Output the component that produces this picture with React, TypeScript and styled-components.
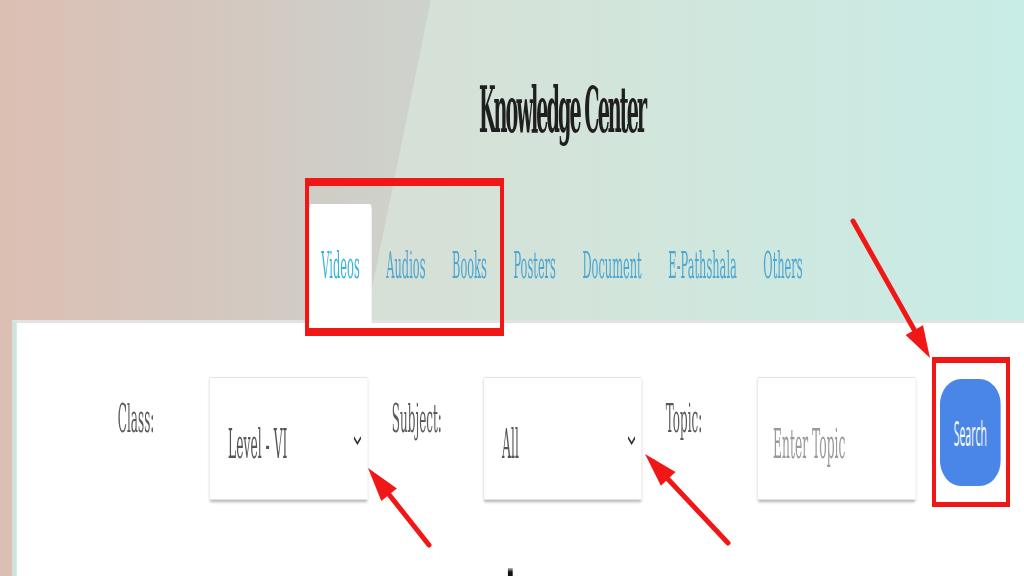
import styled, { createGlobalStyle } from "styled-components";

// the reference is a page squeezed horizontally; the stage is laid out wide
// and scaled back down on x only
const S = 0.3;
const u = (px: number) => `${px / S}px`;

const GlobalStyle = createGlobalStyle`
  html, body {
    margin: 0;
    padding: 0;
  }
  body {
    overflow: hidden;
    font-family: "DejaVu Serif", "Liberation Serif", serif;
  }
`;

const Viewport = styled.div`
  position: relative;
  width: 1024px;
  height: 576px;
  overflow: hidden;
  background: linear-gradient(90deg, #dcbfb3 0%, #d5c6bd 18%, #d0cdc7 32%, #ced3cd 42%);

  &::before {
    content: "";
    position: absolute;
    inset: 0;
    background: linear-gradient(90deg, #d6e0d6 40%, #d1e6dc 65%, #c8ece6 100%);
    clip-path: polygon(431px 0, 100% 0, 100% 100%, 313px 100%);
  }
`;

const Stage = styled.div`
  position: relative;
  box-sizing: border-box;
  width: ${1112 / S}px;
  padding-left: ${u(12)};
  transform: scaleX(${S});
  transform-origin: 0 0;
`;

const Header = styled.header`
  padding-top: 72px;
`;

const Title = styled.h1`
  margin: 0;
  text-align: center;
  font: 700 64px/76px "DejaVu Serif", serif;
  letter-spacing: -6.6px;
  color: #1f1f1f;
`;

const TabRow = styled.nav`
  position: relative;
  z-index: 1;
  display: flex;
  justify-content: center;
  gap: ${u(2.5)};
  margin: 56px 0 -3px;
`;

const Tab = styled.a<{ $active?: boolean }>`
  padding: 39px ${u(12)} 36px;
  font: 400 38px/44px "DejaVu Serif", serif;
  color: ${(p) => (p.$active ? "#36b5de" : "#4da6d1")};
  background: ${(p) => (p.$active ? "#ffffff" : "transparent")};
  border-radius: 6px 6px 0 0;
  text-decoration: none;
  cursor: pointer;
`;

const Panel = styled.section`
  min-height: 300px;
  padding: 54px 0 0 ${u(101)};
  background: #ffffff;
  border-top: 3px solid #e0e3e0;
  border-left: ${u(5)} solid #cde4dc;
`;

const FilterRow = styled.div`
  display: flex;
  align-items: flex-start;
  gap: ${u(24)};
`;

const Field = styled.div`
  display: flex;
  align-items: flex-start;
`;

const Label = styled.label`
  width: ${u(92)};
  padding-top: 17px;
  font: 400 40px/48px "DejaVu Serif", serif;
  color: #5a5a5a;
`;

const boxLook = `
  box-sizing: border-box;
  width: ${u(158)};
  height: 123px;
  background: #ffffff;
  border: 1px solid #e4e4e4;
  box-shadow: 0 2px 5px rgba(0, 0, 0, 0.3);
  font: 400 41px/48px "DejaVu Serif", serif;
  color: #555555;
`;

const SelectBox = styled.div`
  ${boxLook}
  display: flex;
  align-items: center;
  justify-content: space-between;
  padding: 10px ${u(6)} 0 ${u(18)};
`;

const Chevron = styled.svg`
  flex: none;
  margin-bottom: 7px;
`;

const TopicInput = styled.input`
  ${boxLook}
  padding: 10px ${u(6)} 0 ${u(15)};
  outline: none;

  &::placeholder {
    color: #9a9a9a;
  }
`;

const SearchButton = styled.button`
  width: ${u(61)};
  height: 107px;
  margin-top: 2px;
  border: none;
  border-radius: 70px / 26px;
  background: #4a86e8;
  color: #ffffff;
  font: 400 35px/40px "Open Sans", sans-serif;
  cursor: pointer;
`;

const Peek = styled.div`
  width: ${u(5)};
  height: 10px;
  margin: 68px 0 0 ${u(390)};
  background: linear-gradient(#bbbbbb, #111111 40%);
`;

const Annotations = styled.svg`
  position: absolute;
  inset: 0;
  z-index: 2;
  pointer-events: none;
`;

const RED = "#f21717";

const tabs = ["Videos", "Audios", "Books", "Posters", "Document", "E-Pathshala", "Others"];

const Arrow = ({ tail, base, head }: { tail: [number, number]; base: [number, number]; head: string }) => (
  <g>
    <line x1={tail[0]} y1={tail[1]} x2={base[0]} y2={base[1]} stroke={RED} strokeWidth={5} strokeLinecap="round" />
    <polygon points={head} fill={RED} />
  </g>
);

const Select = ({ value }: { value: string }) => (
  <SelectBox>
    <span>{value}</span>
    <Chevron width={u(8)} height="9" viewBox="0 0 24 9" preserveAspectRatio="none">
      <polyline points="1.5,1.5 12,7.5 22.5,1.5" fill="none" stroke="#333" strokeWidth="2.8" />
    </Chevron>
  </SelectBox>
);

export default function App() {
  return (
    <Viewport>
      <GlobalStyle />
      <Stage>
        <Header>
          <Title>Knowledge Center</Title>
        </Header>
        <TabRow>
          {tabs.map((t, i) => (
            <Tab key={t} $active={i === 0}>
              {t}
            </Tab>
          ))}
        </TabRow>
        <Panel>
          <FilterRow>
            <Field>
              <Label>Class:</Label>
              <Select value="Level - VI" />
            </Field>
            <Field>
              <Label>Subject:</Label>
              <Select value="All" />
            </Field>
            <Field>
              <Label>Topic:</Label>
              <TopicInput placeholder="Enter Topic" />
            </Field>
            <SearchButton>Search</SearchButton>
          </FilterRow>
          <Peek />
        </Panel>
      </Stage>

      <Annotations width="1024" height="576" viewBox="0 0 1024 576">
        <path d="M305 178 H504 V336 H305 Z M309 186 V328 H500 V186 Z" fill={RED} fillRule="evenodd" />
        <path d="M932 357 H1010 V507 H932 Z M936 363 V502 H1006 V363 Z" fill={RED} fillRule="evenodd" />
        <Arrow tail={[853, 221]} base={[916, 333]} head="930,358 905.6,335 923,325.2" />
        <Arrow tail={[429, 545]} base={[387, 492]} head="368,468 396.9,488.5 381.3,500.9" />
        <Arrow tail={[728, 543]} base={[666, 477]} head="645,454 675.5,472.1 660.9,485.7" />
      </Annotations>
    </Viewport>
  );
}
